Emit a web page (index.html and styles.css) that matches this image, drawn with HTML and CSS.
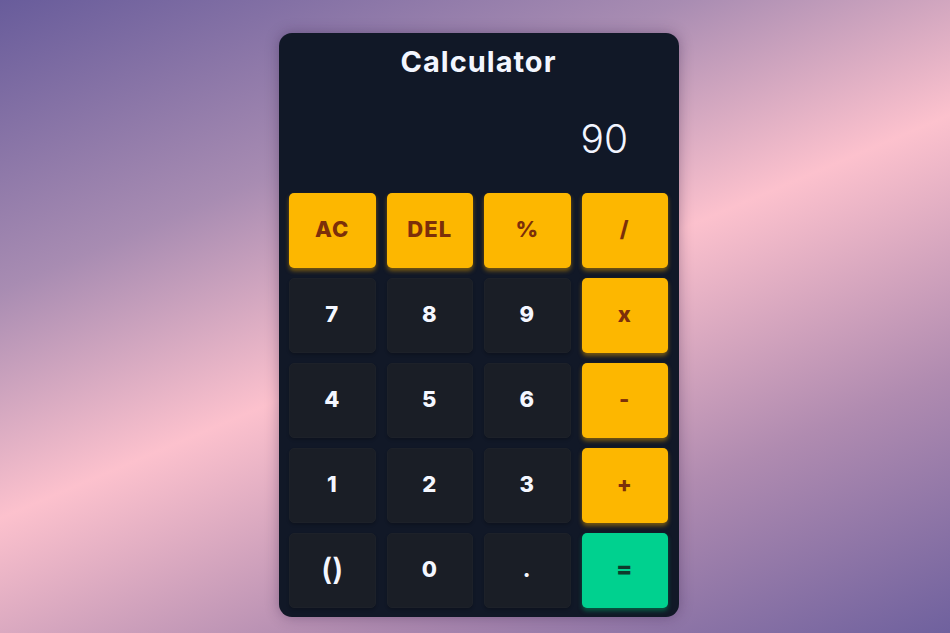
FILE: index.html
```html
<!DOCTYPE html>
<html lang="en">
<head>
<meta charset="utf-8">
<title>Calculator</title>
<link rel="stylesheet" href="styles.css">
</head>
<body>
<main class="calc">
  <h1 class="title">Calculator</h1>
  <div class="display">90</div>
  <div class="keys">
    <button class="key op">AC</button>
    <button class="key op">DEL</button>
    <button class="key op">%</button>
    <button class="key op">/</button>
    <button class="key num">7</button>
    <button class="key num">8</button>
    <button class="key num">9</button>
    <button class="key op">x</button>
    <button class="key num">4</button>
    <button class="key num">5</button>
    <button class="key num">6</button>
    <button class="key op">-</button>
    <button class="key num">1</button>
    <button class="key num">2</button>
    <button class="key num">3</button>
    <button class="key op">+</button>
    <button class="key num paren">()</button>
    <button class="key num">0</button>
    <button class="key num">.</button>
    <button class="key eq">=</button>
  </div>
</main>
</body>
</html>
```
FILE: styles.css
```css
* { box-sizing: border-box; }
html, body { margin: 0; height: 100%; }
body {
  padding-left: 8px;
  background: linear-gradient(157deg, #685c9b 0%, #a88cb2 28%, #fcc1cd 50%, #b08bb0 75%, #6f619e 100%);
  font-family: "Inter", "Lato", sans-serif;
  overflow: hidden;
}
.calc {
  width: 400px;
  margin: 33px auto 0;
  padding: 0 11px 9px 10px;
  background: #111827;
  border-radius: 13px;
  box-shadow: 0 0 14px rgba(40, 20, 60, 0.35);
}
.title {
  margin: 0;
  padding-top: 8px;
  height: 50px;
  line-height: 42px;
  text-align: center;
  color: #f3f6ff;
  font-size: 29px;
  font-weight: 700;
  letter-spacing: 1px;
}
.display {
  height: 110px;
  display: flex;
  align-items: center;
  justify-content: flex-end;
  padding-right: 40px;
  color: #f2f5ff;
  font-family: "Inter", sans-serif;
  font-weight: 300;
  font-size: 39px;
}
.keys {
  display: grid;
  grid-template-columns: repeat(4, 1fr);
  grid-auto-rows: 75px;
  gap: 10px 11px;
}
.key {
  border: none;
  border-radius: 5px;
  font-family: "Inter", sans-serif;
  font-weight: 800;
  font-size: 22px;
  letter-spacing: 1px;
  padding: 0 0 4px;
}
.op {
  background: #fdb700;
  color: #7c2f0a;
  box-shadow: 0 3px 4px rgba(200, 140, 0, 0.55);
}
.num {
  background: #1a1e26;
  color: #f4f7ff;
  border: 1px solid #1d2129;
  box-shadow: 0 2px 3px rgba(0, 0, 0, 0.2);
}
.paren { font-size: 30px; font-weight: 600; letter-spacing: 0; }
.eq {
  background: #00d18f;
  color: #0f3a2c;
  font-size: 24px;
  box-shadow: 0 3px 4px rgba(0, 140, 90, 0.55);
}
```
